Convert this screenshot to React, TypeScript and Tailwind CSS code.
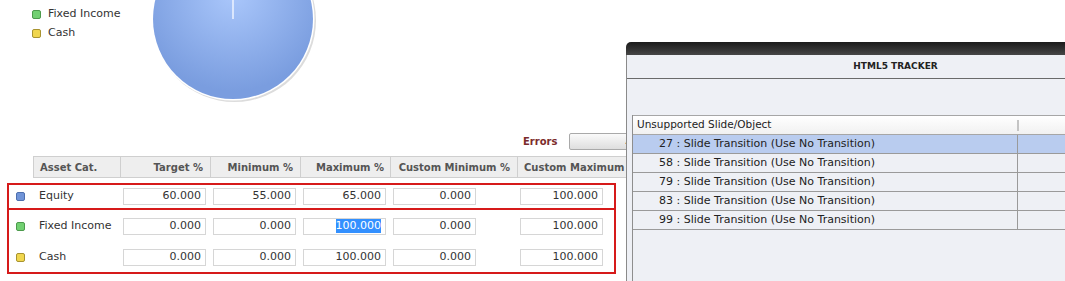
import React from 'react';

const dv = { fontFamily: '"DejaVu Sans", Verdana, sans-serif' };

type Row = { name: string; color: string; border: string; values: string[] };

const rows: Row[] = [
  { name: 'Equity', color: 'bg-[#7094d8]', border: 'border-[#4d6fae]', values: ['60.000', '55.000', '65.000', '0.000', '100.000'] },
  { name: 'Fixed Income', color: 'bg-[#72d072]', border: 'border-[#4c9a4c]', values: ['0.000', '0.000', '100.000', '0.000', '100.000'] },
  { name: 'Cash', color: 'bg-[#f0d64e]', border: 'border-[#a89330]', values: ['0.000', '0.000', '100.000', '0.000', '100.000'] },
];

const trackerRows = ['27', '58', '79', '83', '99'];

const Swatch = ({ color, border }: { color: string; border: string }) => (
  <span className={`inline-block w-[9px] h-[9px] rounded-[2px] border ${color} ${border}`} />
);

const ValueInput = ({ value, selected }: { value: string; selected?: boolean }) => (
  <div className="ml-[3px] w-[83px] h-[17px] border border-[#d6d6d6] bg-white flex items-center justify-end pr-[4px] text-[11px] text-[#333]">
    {selected ? <span className="bg-[#3390ff] text-white leading-[14px]">{value}</span> : value}
  </div>
);

const AllocRow = ({ row, selectedCol }: { row: Row; selectedCol?: number }) => (
  <div className="flex items-center h-full">
    <div className="w-[111px] flex items-center pl-[7px]">
      <Swatch color={row.color} border={row.border} />
      <span className="ml-[14px] text-[11px] text-[#333]">{row.name}</span>
    </div>
    <div className="w-[90px]"><ValueInput value={row.values[0]} /></div>
    <div className="w-[90px]"><ValueInput value={row.values[1]} /></div>
    <div className="w-[90px]"><ValueInput value={row.values[2]} selected={selectedCol === 2} /></div>
    <div className="w-[127px]"><ValueInput value={row.values[3]} /></div>
    <div className="w-[97px]"><ValueInput value={row.values[4]} /></div>
  </div>
);

const Pie = () => (
  <svg width="176" height="106" viewBox="0 0 176 106" className="block">
    <defs>
      <radialGradient id="pieFill" cx="50%" cy="35%" r="60%">
        <stop offset="0%" stopColor="#aac7fb" />
        <stop offset="100%" stopColor="#7a9ddf" />
      </radialGradient>
    </defs>
    <circle cx="86.5" cy="20.5" r="81.5" fill="#dcdcdc" />
    <circle cx="85" cy="19" r="81.5" fill="#ffffff" />
    <circle cx="85" cy="19" r="80" fill="url(#pieFill)" />
    <line x1="85" y1="0" x2="85" y2="19" stroke="#eef3ff" strokeWidth="1.5" />
  </svg>
);

const Tracker = () => (
  <div className="absolute left-[626px] top-[42px] w-[538px] h-[260px] flex flex-col" style={dv}>
    <div className="h-[13px] rounded-tl-[5px] bg-gradient-to-b from-[#1b1b1b] to-[#464646]" />
    <div className="flex-1 bg-[#eef0f5] border-l border-[#8a8a8a] flex flex-col">
      <div className="h-[24px] border-b border-[#6a6a6a] flex items-center justify-center text-[9px] font-bold text-[#222]">
        HTML5 TRACKER
      </div>
      <div className="h-[36px]" />
      <div className="ml-[5px] flex-1 border-l border-[#8e8e8e] flex flex-col">
        <div className="h-[20px] flex border-t border-b border-[#a6a6a6] bg-gradient-to-b from-white to-[#f1f1f1]">
          <div className="w-[384px] flex items-center pl-[4px] text-[10.5px] text-[#222]">Unsupported Slide/Object</div>
          <div className="flex items-center">
            <span className="block w-[2px] h-[11px] bg-[#c4c4c4]" />
          </div>
        </div>
        {trackerRows.map((n, i) => (
          <div
            key={n}
            className={`h-[19px] flex border-b border-[#9a9a9a] ${i === 0 ? 'bg-[#b9ccef]' : ''}`}
          >
            <div className="w-[384px] flex items-center pl-[26px] text-[11px] text-[#222] whitespace-nowrap">
              {n} : Slide Transition (Use No Transition)
            </div>
            <div className="border-l border-[#9a9a9a] flex-1" />
          </div>
        ))}
      </div>
    </div>
  </div>
);

export default function App() {
  return (
    <div className="relative w-[1065px] h-[281px] overflow-hidden bg-white" style={dv}>
      <div className="h-[133px] flex">
        <div className="w-[148px] pl-[32px] pt-[5px] flex flex-col">
          <div className="h-[19px] flex items-center">
            <Swatch color="bg-[#72d072]" border="border-[#4c9a4c]" />
            <span className="ml-[7px] text-[11px] text-[#333]">Fixed Income</span>
          </div>
          <div className="h-[19px] flex items-center">
            <Swatch color="bg-[#f0d64e]" border="border-[#a89330]" />
            <span className="ml-[7px] text-[11px] text-[#333]">Cash</span>
          </div>
        </div>
        <Pie />
      </div>

      <div className="h-[17px] flex items-center pl-[523px]">
        <span className="text-[10px] font-bold text-[#7b2b2b]">Errors</span>
        <div className="ml-[12px] w-[130px] h-[17px] border border-[#a9a9a9] rounded-[2px] bg-gradient-to-b from-[#fafafa] to-[#dedede] flex items-center pl-[55px] text-[11px] text-[#333]">
          Apply
        </div>
      </div>

      <div className="mt-[6px] ml-[33px] h-[22px] flex bg-[#eeeeee] border-t border-b border-[#cfcfcf] text-[10px] font-bold text-[#555] whitespace-nowrap">
        <div className="w-[87px] border-l border-[#cfcfcf] flex items-center pl-[6px]">Asset Cat.</div>
        <div className="w-[90px] border-l border-[#cfcfcf] flex items-center justify-end pr-[7px]">Target %</div>
        <div className="w-[90px] border-l border-[#cfcfcf] flex items-center justify-end pr-[7px]">Minimum %</div>
        <div className="w-[90px] border-l border-[#cfcfcf] flex items-center justify-end pr-[6px]">Maximum %</div>
        <div className="w-[127px] border-l border-[#cfcfcf] flex items-center justify-end pr-[7px]">Custom Minimum %</div>
        <div className="w-[200px] border-l border-[#cfcfcf] flex items-center pl-[6px]">Custom Maximum %</div>
      </div>

      <div className="mt-[5px] ml-[7px] w-[609px]">
        <div className="h-[27px] border-2 border-[#d61a1a]">
          <AllocRow row={rows[0]} />
        </div>
        <div className="h-[64px] border-2 border-t-0 border-[#d61a1a] flex flex-col">
          <div className="h-[32px]"><AllocRow row={rows[1]} selectedCol={2} /></div>
          <div className="h-[30px]"><AllocRow row={rows[2]} /></div>
        </div>
      </div>

      <Tracker />
    </div>
  );
}
